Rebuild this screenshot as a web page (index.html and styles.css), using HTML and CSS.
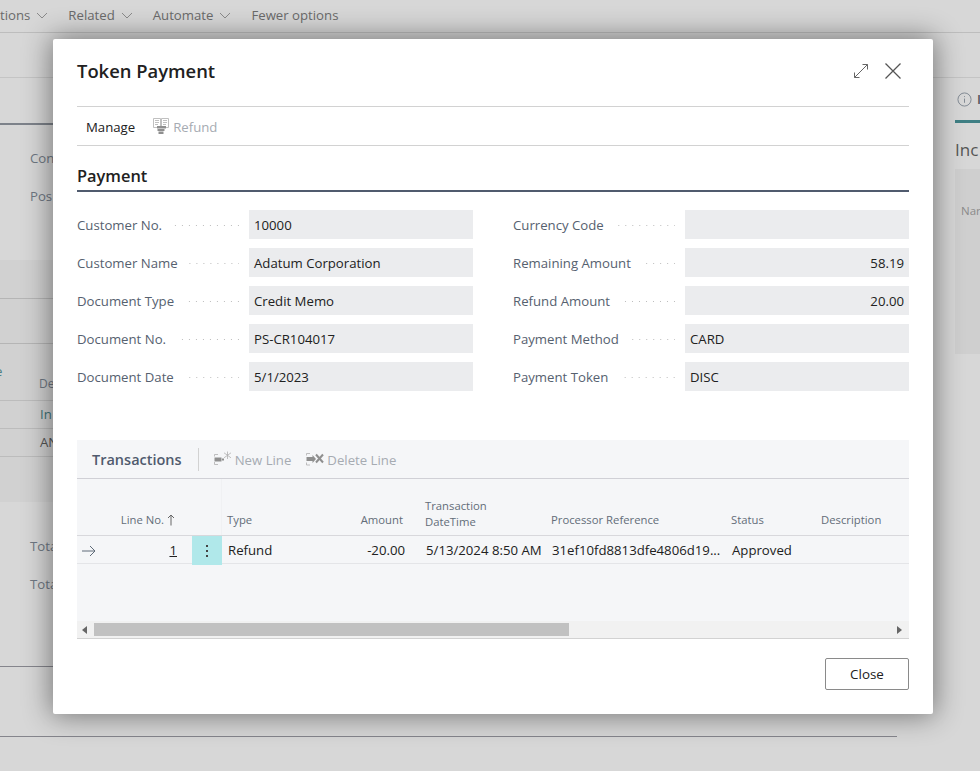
FILE: index.html
```html
<!DOCTYPE html>
<html lang="en">
<head>
    <meta charset="UTF-8">
    <title>Token Payment</title>
    <link rel="stylesheet" href="styles.css">
</head>

<body>
    <!-- page behind the dialog -->
    <div class="page">
        <div class="actions">
            <span class="action">tions <svg class="chev" viewBox="0 0 12 7"><path d="M1 1l5 5 5-5"/></svg></span>
            <span class="action">Related <svg class="chev" viewBox="0 0 12 7"><path d="M1 1l5 5 5-5"/></svg></span>
            <span class="action">Automate <svg class="chev" viewBox="0 0 12 7"><path d="M1 1l5 5 5-5"/></svg></span>
            <span class="action">Fewer options</span>
        </div>
        <div class="page-head"></div>
        <div class="page-body">
            <div class="page-main">
                <div class="main-tab"></div>
                <div class="main-fields">
                    <div class="main-field">Con</div>
                    <div class="main-field">Pos</div>
                </div>
                <div class="main-band">
                    <div class="band-row"></div>
                    <div class="band-row band-row-tall"></div>
                    <div class="band-head"><span class="band-mark">e</span><span class="band-head-text">De</span></div>
                    <div class="band-line link">In</div>
                    <div class="band-line">AN</div>
                </div>
                <div class="totals">
                    <div class="main-field">Tota</div>
                    <div class="main-field">Tota</div>
                </div>
                <div class="rule-two"></div>
            </div>
            <div class="page-side">
                <div class="side-tab">
                    <svg class="info" viewBox="0 0 16 16"><circle cx="8" cy="8" r="7"/><path d="M8 7v4.500M8 4.400v1"/></svg>
                    <span class="side-tab-text">I</span>
                </div>
                <div class="side-title">Inc</div>
                <div class="side-panel">Nar</div>
            </div>
        </div>
    </div>

    <div class="modal">
        <div class="modal-head">
            <h1>Token Payment</h1>
            <div class="modal-icons">
                <svg class="expand" viewBox="0 0 16 16"><path d="M1.500 14.500l13-13M9.500 1.500h5v5M1.500 9.500v5h5"/></svg>
                <svg class="close-x" viewBox="0 0 16 16"><path d="M.5.5l15 15M15.500 .5l-15 15"/></svg>
            </div>
        </div>

        <div class="toolbar">
            <span class="tool-main">Manage</span>
            <span class="tool off">
                <svg class="tool-icon" viewBox="0 0 16 16"><path d="M.5.500h7v9h-7zM8.500.500h7v9h-7zM2 2.500h4M2 4.500h4M2 6.500h3M10 2.500h4M10 4.500h4M10 6.500h3"/><path class="solid" d="M4 8h9v2.500H4zM4.500 11h7v2H4.500zM5.500 13.500h5V16h-5z"/></svg>
                Refund
            </span>
        </div>

        <h2 class="section">Payment</h2>

        <div class="fields">
            <div class="field"><span class="label">Customer No.</span><span class="dots"></span><span class="value">10000</span></div>
            <div class="field"><span class="label">Currency Code</span><span class="dots"></span><span class="value"></span></div>
            <div class="field"><span class="label">Customer Name</span><span class="dots"></span><span class="value">Adatum Corporation</span></div>
            <div class="field"><span class="label">Remaining Amount</span><span class="dots"></span><span class="value num">58.19</span></div>
            <div class="field"><span class="label">Document Type</span><span class="dots"></span><span class="value">Credit Memo</span></div>
            <div class="field"><span class="label">Refund Amount</span><span class="dots"></span><span class="value num">20.00</span></div>
            <div class="field"><span class="label">Document No.</span><span class="dots"></span><span class="value">PS-CR104017</span></div>
            <div class="field"><span class="label">Payment Method</span><span class="dots"></span><span class="value">CARD</span></div>
            <div class="field"><span class="label">Document Date</span><span class="dots"></span><span class="value">5/1/2023</span></div>
            <div class="field"><span class="label">Payment Token</span><span class="dots"></span><span class="value">DISC</span></div>
        </div>

        <div class="lines">
            <div class="lines-bar">
                <span class="lines-title">Transactions</span>
                <span class="tool off">
                    <svg class="tool-icon wide" viewBox="0 0 18 16"><path d="M4 3.500H.5v2M.5 11v2.500H4"/><path class="solid" d="M.5 6.500h7v4h-7zM8 7.500h2v2H8z"/><path d="M13.500 .5v7.500M10 1.800l7 5M17 1.800l-7 5"/></svg>
                    New Line
                </span>
                <span class="tool off">
                    <svg class="tool-icon wide" viewBox="0 0 18 16"><path d="M4 2.500H.5v2M.5 11.500V14H4"/><path class="solid" d="M.5 6h6V4l3.500 4-3.500 4v-2h-6z"/><path class="thick" d="M10 3.500l7 8M17 3.500l-7 8"/></svg>
                    Delete Line
                </span>
            </div>

            <div class="tx-head">
                <span></span>
                <span class="h-line">Line No. <svg class="sort" viewBox="0 0 8 12"><path d="M4 11.500V1M1 4l3-3 3 3"/></svg></span>
                <span class="h-menu"></span>
                <span class="h-cell h-type">Type</span>
                <span class="h-cell h-right">Amount</span>
                <span class="h-cell h-two">Transaction<br>DateTime</span>
                <span class="h-cell">Processor Reference</span>
                <span class="h-cell">Status</span>
                <span class="h-cell">Description</span>
            </div>
            <div class="tx-row">
                <span class="c-arrow"><svg class="arrow" viewBox="0 0 14 12"><path d="M0 6h13M8 1l5 5-5 5"/></svg></span>
                <span class="c-line"><u>1</u></span>
                <span class="c-menu"><i></i><i></i><i></i></span>
                <span class="c-cell">Refund</span>
                <span class="c-cell c-right">-20.00</span>
                <span class="c-cell">5/13/2024 8:50 AM</span>
                <span class="c-cell">31ef10fd8813dfe4806d19...</span>
                <span class="c-cell">Approved</span>
                <span class="c-cell"></span>
            </div>
            <div class="tx-empty"></div>
            <div class="scrollbar">
                <svg class="scroll-arrow" viewBox="0 0 5 8"><path d="M5 0v8L0 4z"/></svg>
                <div class="scroll-track"><div class="scroll-thumb"></div></div>
                <svg class="scroll-arrow" viewBox="0 0 5 8"><path d="M0 0v8l5-4z"/></svg>
            </div>
        </div>

        <div class="modal-foot">
            <button class="close-btn">Close</button>
        </div>
    </div>
</body>
</html>
```

FILE: styles.css
```css
body {
    margin: 0;
    font-family: "Open Sans", "Noto Sans", sans-serif;
    font-size: 13.2px;
    color: #212121;
    overflow: hidden;
}

/* page behind the dialog */
.page {
    width: 980px;
    height: 771px;
    overflow: hidden;
    background-color: #d7d7d7;
    color: #6f7883;
}

.actions {
    height: 30px;
    padding-bottom: 2px;
    border-bottom: 1px solid #bdbdbd;
    display: flex;
    align-items: center;
    gap: 20px;
    color: #6a6a6a;
}

.action {
    display: flex;
    align-items: center;
    gap: 6px;
}

.chev {
    width: 12px;
    height: 7px;
    fill: none;
    stroke: #8a8a8a;
}

.page-head {
    height: 44px;
    border-bottom: 1px solid #c4c4c4;
}

.page-body {
    display: flex;
}

.page-main {
    width: 897px;
    flex: none;
}

.main-tab {
    height: 45px;
    border-bottom: 2px solid #7d828a;
}

.main-fields {
    padding: 14px 0 0 30px;
    height: 121px;
}

.main-field {
    height: 38px;
    line-height: 38px;
}

.main-band {
    height: 242px;
    background-color: #d1d1d1;
}

.band-row {
    height: 37px;
    border-bottom: 1px solid #b5b5b5;
}

.band-row:first-child {
    height: 38px;
}

.band-row-tall {
    height: 44px;
}

.band-head {
    display: flex;
    font-size: 12px;
    height: 56px;
    border-bottom: 1px solid #bcbcbc;
}

.band-mark {
    width: 39px;
    margin: 18px 0 0 -5px;
    flex: none;
    font-size: 13.2px;
    line-height: 18px;
    color: #4f7f83;
}

.band-head-text {
    margin: 31px 0 0 5px;
    line-height: 18px;
}

.band-line {
    height: 27px;
    line-height: 27px;
    padding-left: 40px;
    border-bottom: 1px solid #bcbcbc;
    color: #555;
}

.link {
    color: #3d7478;
}

.totals {
    padding: 25px 0 0 30px;
    height: 139px;
    border-bottom: 1px solid #85858c;
}

.rule-two {
    height: 69px;
    border-bottom: 1px solid #85858c;
}

.page-side {
    margin-left: 58px;
    flex: none;
    width: 60px;
}

.side-tab {
    height: 42px;
    border-bottom: 3px solid #3f7f84;
    display: flex;
    align-items: center;
    gap: 5px;
    margin-bottom: 15px;
    padding-left: 2px;
}

.info {
    width: 15px;
    height: 15px;
    fill: none;
    stroke: #7e8690;
}

.side-tab-text {
    color: #555;
    font-weight: 600;
}

.side-title {
    font-size: 17px;
    line-height: 24px;
    color: #555;
    margin-bottom: 7px;
}

.side-panel {
    height: 185px;
    background-color: #cfcfcf;
    font-size: 11.5px;
    padding: 34px 0 0 6px;
    box-sizing: border-box;
    color: #8b8b8b;
}

/* dialog */
.modal {
    position: absolute;
    left: 53px;
    top: 39px;
    width: 880px;
    height: 675px;
    box-sizing: border-box;
    padding: 0 24px;
    background-color: white;
    border-radius: 2px;
    box-shadow: 0 0 28px 2px rgba(0, 0, 0, 0.45);
}

.modal-head {
    height: 63px;
    padding-bottom: 4px;
    border-bottom: 1px solid #d2d2d2;
    display: flex;
    align-items: center;
    justify-content: space-between;
}

h1 {
    margin: 0;
    font-size: 18.4px;
    font-weight: 600;
}

.modal-icons {
    display: flex;
    align-items: center;
    gap: 16px;
    padding-right: 8px;
}

.expand {
    width: 16px;
    height: 16px;
    fill: none;
    stroke: #666;
}

.close-x {
    width: 16px;
    height: 16px;
    fill: none;
    stroke: #555;
    stroke-width: 1.3;
}

.toolbar {
    height: 39px;
    box-sizing: border-box;
    padding: 1px 0 0 9px;
    border-bottom: 1px solid #d2d2d2;
    display: flex;
    align-items: center;
    gap: 18px;
    margin-bottom: -1px;
}

.tool {
    display: flex;
    align-items: center;
    gap: 4px;
}

.off {
    color: #a6abb2;
}

.tool-icon {
    width: 16px;
    height: 16px;
    margin-top: -2px;
    fill: none;
    stroke: #b0b0b0;
    stroke-width: 0.8;
}

.tool-icon.wide {
    width: 18px;
}

.tool-icon .solid {
    fill: #8f8f8f;
    stroke: none;
}

.tool-icon .thick {
    stroke: #8f8f8f;
    stroke-width: 2;
}

.section {
    margin: 0;
    height: 45px;
    line-height: 61px;
    font-size: 16.4px;
    font-weight: 600;
    border-bottom: 2px solid #505b6e;
}

.fields {
    display: grid;
    grid-template-columns: 396px 396px;
    column-gap: 40px;
    row-gap: 9px;
    margin-top: 18px;
}

.field {
    display: flex;
    align-items: center;
    height: 29px;
}

.label {
    color: #56616f;
}

.dots {
    flex: 1;
    height: 1px;
    margin: 1px 10px 0 11px;
    background-image: linear-gradient(to left, #bdbdbd 1px, transparent 1px);
    background-size: 7px 1px;
    background-position: right;
}

.value {
    width: 224px;
    height: 29px;
    line-height: 30px;
    box-sizing: border-box;
    padding: 0 5px;
    background-color: #ebecee;
    flex: none;
}

.num {
    text-align: right;
}

/* transactions part */
.lines {
    margin-top: 49px;
    background-color: #f5f6f8;
    height: 199px;
    border-bottom: 1px solid #d2d2d2;
    box-sizing: border-box;
}

.lines-bar {
    height: 39px;
    box-sizing: border-box;
    padding: 1px 0 0 15px;
    border-bottom: 1px solid #d0d0d6;
    display: flex;
    align-items: center;
    gap: 15px;
}

.lines-bar .tool {
    gap: 3px;
}

.lines-title {
    font-size: 14.5px;
    font-weight: 600;
    color: #505b6e;
    padding-right: 16px;
    border-right: 1px solid #d2d2d2;
    line-height: 23px;
}

.tx-head, .tx-row {
    display: grid;
    grid-template-columns: 30px 85px 30px 125px 73px 126px 180px 90px 93px;
}

.tx-head {
    height: 56px;
    border-bottom: 1px solid #d8d8dc;
    font-size: 11.3px;
    color: #636d79;
    line-height: 16px;
}

.h-line {
    align-self: end;
    text-align: right;
    padding: 0 17px 7px 0;
}

.sort {
    width: 8px;
    height: 12px;
    fill: none;
    stroke: #666;
    vertical-align: -2px;
}

.h-menu {
    border-right: 1px solid #f0f1f3;
}

.h-cell {
    align-self: end;
    padding: 0 0 7px 5px;
}

.h-two {
    padding-bottom: 5px;
}

.h-right {
    text-align: right;
    padding: 0 17px 7px 0;
}

.tx-row {
    height: 27px;
    line-height: 29px;
    border-bottom: 1px solid #e4e5e8;
}

.c-arrow {
    display: flex;
    align-items: center;
    padding-left: 5px;
}

.arrow {
    width: 14px;
    height: 12px;
    fill: none;
    stroke: #5f6b78;
}

.c-line {
    text-align: right;
    padding-right: 15px;
}

.c-menu {
    background-color: #b0e8ea;
    display: flex;
    flex-direction: column;
    align-items: center;
    justify-content: center;
    gap: 3px;
}

.c-menu i {
    width: 2px;
    height: 2px;
    background-color: #444;
}

.c-cell {
    padding-left: 6px;
    white-space: nowrap;
}

.c-right {
    text-align: right;
    padding: 0 15px 0 0;
}

.tx-empty {
    height: 57px;
}

.scrollbar {
    height: 17px;
    background-color: #f1f1f1;
    display: flex;
    align-items: center;
    padding: 0 7px 0 5px;
}

.scroll-arrow {
    width: 5px;
    height: 8px;
    fill: #666;
    flex: none;
}

.scroll-track {
    flex: 1;
    padding-left: 7px;
    height: 13px;
}

.scroll-thumb {
    width: 475px;
    height: 13px;
    background-color: #c1c1c1;
}

.modal-foot {
    display: flex;
    justify-content: flex-end;
    padding-top: 19px;
}

.close-btn {
    width: 84px;
    height: 32px;
    background-color: white;
    border: 1px solid #8a8a8a;
    border-radius: 2px;
    font-family: inherit;
    font-size: 13.4px;
    font-weight: 500;
    color: #212121;
}
```
